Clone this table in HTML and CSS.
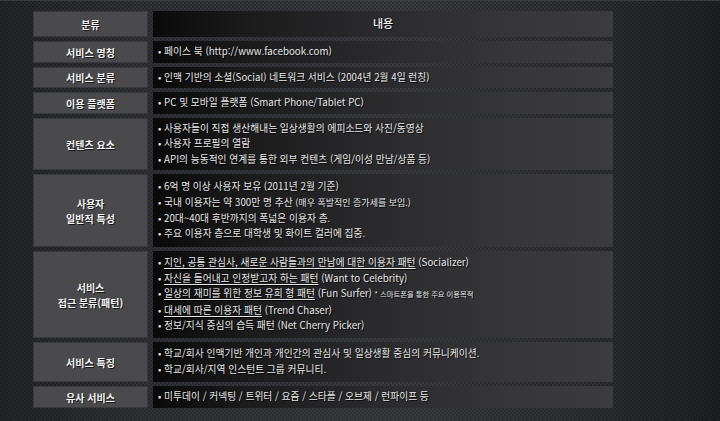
FILE: index.html
```html
<!DOCTYPE html>
<html lang="ko">
<head>
<meta charset="utf-8">
<link rel="stylesheet" href="styles.css">
</head>
<body>
<div class="table">
  <div class="th">분류</div><div class="td head">내용</div>

  <div class="th">서비스 명칭</div>
  <div class="td"><p>• 페이스 북 (http://www.facebook.com)</p></div>

  <div class="th">서비스 분류</div>
  <div class="td"><p>• 인맥 기반의 소셜(Social) 네트워크 서비스 (2004년 2월 4일 런칭)</p></div>

  <div class="th">이용 플랫폼</div>
  <div class="td"><p>• PC 및 모바일 플랫폼 (Smart Phone/Tablet PC)</p></div>

  <div class="th">컨텐츠 요소</div>
  <div class="td">
    <p>• 사용자들이 직접 생산해내는 일상생활의 에피소드와 사진/동영상</p>
    <p>• 사용자 프로필의 열람</p>
    <p>• API의 능동적인 연계를 통한 외부 컨텐츠 (게임/이성 만남/상품 등)</p>
  </div>

  <div class="th">사용자<br>일반적 특성</div>
  <div class="td">
    <p>• 6억 명 이상 사용자 보유 (2011년 2월 기준)</p>
    <p>• 국내 이용자는 약 300만 명 추산 <span class="sm">(매우 폭발적인 증가세를 보임.)</span></p>
    <p>• 20대~40대 후반까지의 폭넓은 이용자 층.</p>
    <p>• 주요 이용자 층으로 대학생 및 화이트 컬러에 집중.</p>
  </div>

  <div class="th">서비스<br>접근 분류(패턴)</div>
  <div class="td">
    <p>• <u>지인, 공통 관심사, 새로운 사람들과의 만남에 대한 이용자 패턴</u> (Socializer)</p>
    <p>• <u>자신을 들어내고 인정받고자 하는 패턴</u> (Want to Celebrity)</p>
    <p>• <u>일상의 재미를 위한 정보 유희 형 패턴</u> (Fun Surfer) <span class="xs">* 스마트폰을 통한 주요 이용목적</span></p>
    <p>• <u>대세에 따른 이용자 패턴</u> (Trend Chaser)</p>
    <p>• 정보/지식 중심의 습득 패턴 (Net Cherry Picker)</p>
  </div>

  <div class="th">서비스 특징</div>
  <div class="td">
    <p>• 학교/회사 인맥기반 개인과 개인간의 관심사 및 일상생활 중심의 커뮤니케이션.</p>
    <p>• 학교/회사/지역 인스턴트 그룹 커뮤니티.</p>
  </div>

  <div class="th">유사 서비스</div>
  <div class="td"><p>• 미투데이 / 커넥팅 / 트위터 / 요즘 / 스타플 / 오브제 / 런파이프 등</p></div>
</div>
</body>
</html>
```

FILE: styles.css
```css
html, body {
  margin: 0;
  padding: 0;
  width: 720px;
  height: 421px;
  overflow: hidden;
}
body {
  font-family: "Noto Sans CJK KR", "Noto Sans", sans-serif;
  background:
    repeating-conic-gradient(rgba(0,0,0,0.10) 0 25%, rgba(255,255,255,0.025) 0 50%) 0 0 / 4px 4px,
    linear-gradient(90deg, #202125 0%, #2c2d31 20%, #35363a 55%, #2a2b2f 80%, #1b1c20 100%);
  border-top: 1px solid #3a3b3f;
  box-sizing: border-box;
}
.table {
  display: grid;
  grid-template-columns: 115px 460px;
  grid-template-rows: 26px 22px 21px 22px 52px 73px 87px 40px 22px;
  column-gap: 5px;
  row-gap: 4px;
  margin: 10px 0 0 33px;
}
.th {
  background: #4a4a4c;
  box-shadow: inset 0 0 0 1px rgba(0,0,0,0.22);
  color: #f4f4f4;
  font-size: 10px;
  font-weight: 700;
  line-height: 15px;
  text-align: center;
  display: flex;
  align-items: center;
  justify-content: center;
  text-shadow: 1px 1px 0 rgba(0,0,0,0.7);
}
.td {
  background: linear-gradient(90deg, #0a0a0a 0%, #1c1c1d 22%, #2b2b2d 50%, #37373a 80%, #3b3b3f 100%);
  color: #e8e8e8;
  font-size: 9.75px;
  line-height: 15.6px;
  padding-left: 5px;
  display: flex;
  flex-direction: column;
  justify-content: center;
  text-shadow: 1px 1px 0 rgba(0,0,0,0.8);
}
.td p {
  margin: 0;
  white-space: nowrap;
}
.td.head {
  align-items: center;
  padding-left: 0;
  font-size: 11px;
  font-weight: 500;
  color: #f4f4f4;
}
.td u {
  text-underline-offset: 2px;
}
.sm {
  font-size: 9px;
}
.xs {
  font-size: 7.3px;
}
```
